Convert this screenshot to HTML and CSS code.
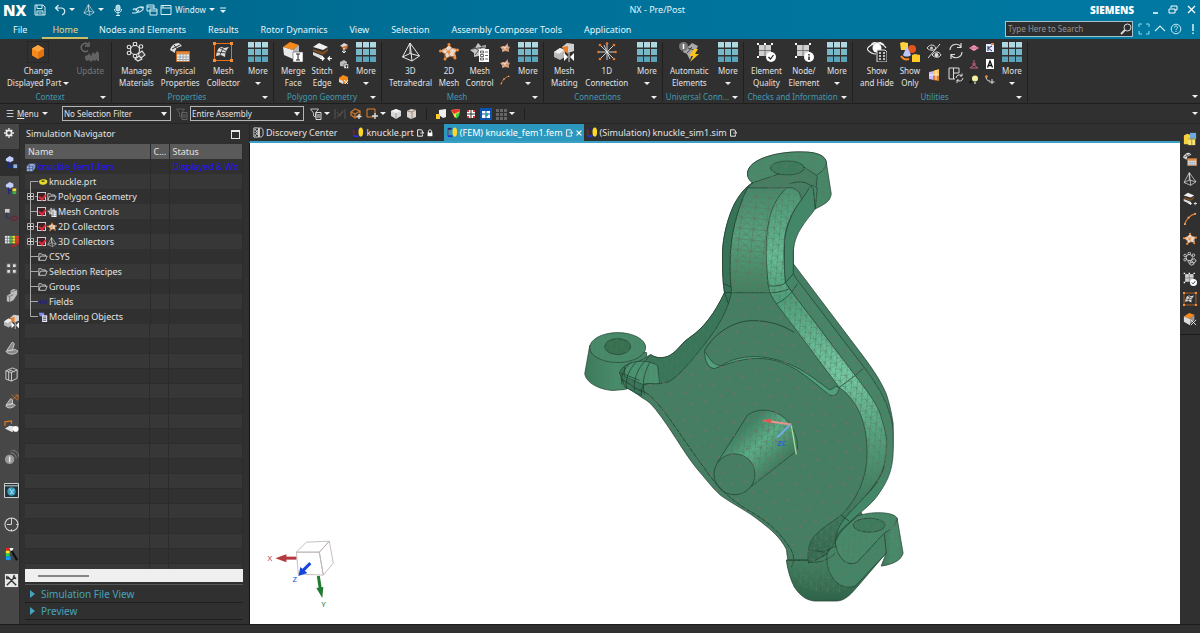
FILE: index.html
```html
<!DOCTYPE html>
<html lang="en">
<head>
    <meta charset="UTF-8">
    <meta name="viewport" content="width=device-width, initial-scale=1.0">
    <title>NX - Pre/Post</title>
    <link rel="stylesheet" href="styles.css">
</head>
<body>

    <!-- Icon sprite -->
    <svg class="sprite" aria-hidden="true">
        <symbol id="i-save" viewBox="0 0 12 12"><path d="M1 1h8l2 2v8H1zM3 1v3.500h5V1M3 11V7h6v4M4.500 9h3" fill="none" stroke="#d5edf5"/></symbol>
        <symbol id="i-undo" viewBox="0 0 12 12"><path d="M4.500 1L1.500 4l3 3M2 4h5c5 0 4.500 6 1 7" fill="none" stroke="#d5edf5" stroke-width="1.200"/></symbol>
        <symbol id="i-tet" viewBox="0 0 20 20"><path d="M9 1L1.500 15l9.500 4 7.500-5zM9 1l2 18M1.500 15L9 11.500l9.500 2.500M9 1v10.500" fill="none" stroke="#e8e8e8" stroke-linejoin="round"/></symbol>
        <symbol id="i-mic" viewBox="0 0 12 12"><rect x="4" y="1" width="4" height="6" rx="2" fill="#9fd0e2" stroke="#d5edf5"/><path d="M2.500 5c0 5 7 5 7 0M6 9v2.500M4 11.500h4" fill="none" stroke="#d5edf5"/></symbol>
        <symbol id="i-pen" viewBox="0 0 12 12"><path d="M1 6c1-2 3-1 4 0M4 7c0-4 6-5 7-3s-4 5-6 4M0 9h4l3-3M9 4l3-1" fill="none" stroke="#d5edf5" stroke-width="1.100"/></symbol>
        <symbol id="i-copywin" viewBox="0 0 12 12"><path d="M1 1h7v6H1zM1 3h7" fill="none" stroke="#d5edf5"/><path d="M4 5h7v6H4zM4 7h7" fill="#006a8e" stroke="#d5edf5"/></symbol>
        <symbol id="i-win" viewBox="0 0 12 12"><path d="M1 1.500h10v9H1zM1 4h10M3 2v2" fill="none" stroke="#d5edf5"/></symbol>
        <symbol id="i-cube" viewBox="0 0 20 20"><path d="M10 3l6 3.500v7L10 17l-6-3.500v-7z" fill="#f58a1a"/><path d="M10 3l6 3.500-6 3.500-6-3.500z" fill="#ffa540"/><path d="M10 10l6-3.500v7L10 17z" fill="#e27410"/></symbol>
        <symbol id="i-update" viewBox="0 0 20 20"><path d="M8 2.500a4 4 0 1 0 0 6M9 0v4H5" fill="none" stroke="#6c6c6c" stroke-width="1.300"/><path d="M5 14l3-1 1-2 2 3 2-4 2 2 2-3 2 2v8h-2v-2l-2 2-2-1-2 2-2-2-2 1-2-2z" fill="#626262"/></symbol>
        <symbol id="i-atom" viewBox="0 0 20 20"><g fill="none" stroke="#e4e4e4" stroke-width="1.100"><circle cx="9" cy="8" r="4.500"/><circle cx="9" cy="2" r="1.800"/><circle cx="3" cy="5" r="1.800"/><circle cx="15" cy="4.500" r="1.800"/><circle cx="3" cy="11" r="1.800"/><circle cx="9" cy="14" r="1.800"/><path d="M12 12l4-3 3 4-4 3zM9 17l4-3 3 3-4 2z" fill="#444"/></g></symbol>
        <symbol id="i-prop" viewBox="0 0 20 20"><path d="M0 8C1 4 4 1 9 1l3 3C8 5 5 7 5 11z" fill="#e0e0e0"/><path d="M4 3l4 5M2 7l8-4" stroke="#333" fill="none"/><path d="M6.500 9.500h13v10h-13z" fill="#f1efec" stroke="#c46a24"/><path d="M7 10h12v2.500H7z" fill="#e08a43"/><path d="M10 12v8M13 12v8M16 12v8M7 15h12.500M7 17.500h12.500" stroke="#8c99a6" stroke-width=".8"/></symbol>
        <symbol id="i-coll" viewBox="0 0 20 20"><path d="M1.500 1.500h17v17h-17z" fill="none" stroke="#d97425"/><path d="M0 0h3v3H0zM17 0h3v3h-3zM0 17h3v3H0zM17 17h3v3h-3z" fill="#f59038"/><path d="M3 14c1-5 2-9 6-9l2 1 5-1c-3 3-4 6-4 10l-4-2z" fill="#dedede"/><path d="M10 6L7 13M4 10l9 1M7 6l6 3" stroke="#444" fill="none"/></symbol>
        <symbol id="i-grid" viewBox="0 0 20 20"><path d="M0 0h6v5.500H0zM7 0h6v5.500H7zM14 0h6v5.500h-6z" fill="#aed9e3"/><path d="M0 7h6v6H0zM7 7h6v6H7zM14 7h6v6h-6z" fill="#78b8c9"/><path d="M0 14.500h6V20H0zM7 14.500h6V20H7zM14 14.500h6V20h-6z" fill="#5ba3b9"/></symbol>
        <symbol id="i-merge" viewBox="0 0 20 20"><path d="M0 5l7-5 9 3-6 5z" fill="#f58a1a"/><path d="M0 5l10 3v9L1 13z" fill="#e9e9e9"/><path d="M10 8l6-5v7l-6 7z" fill="#b9b9b9"/><path d="M10 10h10v10H10z" fill="#fff" stroke="#555" stroke-width=".6"/><path d="M15 12v6M13 12h4M13 18h4" stroke="#222"/></symbol>
        <symbol id="i-stitch" viewBox="0 0 20 20"><path d="M1 5l6-4 9 4-5 3z" fill="#f0f0f0"/><path d="M1 7l10 3 5-4v3l-5 4L1 9z" fill="#7a4a20"/><path d="M1 10l10 4v4L1 13z" fill="#ddd"/><path d="M8 16.500h4m-2-2l2 2-2 2M20 16.500h-4m2-2l-2 2 2 2" fill="none" stroke="#fff" stroke-width="1.200"/></symbol>
        <symbol id="i-s1" viewBox="0 0 10 10"><path d="M1 3l4-3 4 2-3 3z" fill="#ddd"/><path d="M3 4l6-2-1 4-4 1z" fill="#c9773c"/><path d="M5 5v5M3 8l2 2 2-2" stroke="#eee" fill="none"/></symbol>
        <symbol id="i-s2" viewBox="0 0 10 10"><path d="M1 3l4-2 3 2v5l-7-1z" fill="#bbb"/><path d="M5 5h4.500v4.500H5z" fill="#fff" stroke="#333" stroke-width=".6"/><path d="M6 7h3M7.500 6v3" stroke="#222" stroke-width=".8"/></symbol>
        <symbol id="i-s3" viewBox="0 0 10 10"><path d="M0 3l4-3 5 2v5l-4 2-5-3z" fill="#f58a1a"/><path d="M0 4l4 2v3L0 7z" fill="#ddd"/><path d="M5 5l4 4M9 5L6 9" stroke="#eee" fill="none"/></symbol>
        <symbol id="i-mesh2" viewBox="0 0 20 20"><path d="M4 7l3-1 3-3 3 3 5 1-2 4 1 4-5-1-5 2-1-4-4-3z" fill="#ead9ca"/><path d="M2 9l4-2 4-4 3 3 5 2-3 4 1 4-5-2-5 3v-5zM6 12l7-6M7 7l4 7" stroke="#d5803f" stroke-width=".8" fill="none"/><g fill="#f38a35"><circle cx="10" cy="2.500" r="1.500"/><circle cx="18.500" cy="8" r="1.500"/><circle cx="1.500" cy="9" r="1.500"/><circle cx="16" cy="16" r="1.500"/><circle cx="6" cy="17" r="1.500"/><circle cx="10" cy="10" r="1.500"/></g></symbol>
        <symbol id="i-ctrl" viewBox="0 0 20 20"><path d="M8 1l3 3 5-1-1 5 2 4-13 3 0-4-4-3 5-2z" fill="#c6c6c6"/><path d="M2 7l13-2M5 13l8-10M4 5l9 7" stroke="#555" fill="none"/><path d="M9 7h10v13H9z" fill="#fff"/><path d="M10.500 9h3v2h-3zM10.500 12.500h3v2h-3zM10.500 16h3v2h-3zM15 10h3M15 13.500h3M15 17h3" stroke="#444" stroke-width=".8" fill="none"/></symbol>
        <symbol id="i-m1" viewBox="0 0 10 10"><path d="M0 4l3-1 2 0 3-3v3l2 1-1 2v3l-3-1-4 1 0-3z" fill="#c4916f"/><path d="M1 5l7-1M3 8l4-6M3 3l4 5" stroke="#f3dfce" stroke-width=".7"/></symbol>
        <symbol id="i-curve" viewBox="0 0 15 15"><path d="M2 13C3 8 8 3 13 2" fill="none" stroke="#dd7b2b" stroke-width="1.300"/><path d="M1 12h2v2H1zM12 1h2v2h-2zM5 5h2v2H5z" fill="#f7a263"/></symbol>
        <symbol id="i-mating" viewBox="0 0 20 20"><path d="M0 10l6-4 5 2v7l-5 3-6-3z" fill="#b9b9b9"/><path d="M0 10l5 2 6-4-5-2z" fill="#eee"/><path d="M8 5l5-4 7 1v7l-6 2-4-3z" fill="#d0d0d0"/><path d="M8 5l6-1v8l-4-3z" fill="#f07d20"/><path d="M10 11l4 4-4 4zM20 11l-4 4 4 4z" fill="#fff"/><path d="M15 11v9" stroke="#fff" stroke-width=".8"/></symbol>
        <symbol id="i-star" viewBox="0 0 20 20"><path d="M10 2v16M2 10h16M4 4l12 12M16 4L4 16M7 3l6 14" stroke="#e0e0e0" stroke-width=".9"/><g fill="#e9792a"><circle cx="3" cy="3" r="1.300"/><circle cx="10" cy="1.500" r="1.300"/><circle cx="17" cy="3" r="1.300"/><circle cx="1.500" cy="10" r="1.300"/><circle cx="18.500" cy="10" r="1.300"/><circle cx="3" cy="17" r="1.300"/><circle cx="17" cy="17" r="1.300"/></g></symbol>
        <symbol id="i-auto" viewBox="0 0 20 20"><path d="M5 6l5-2 3-3 2 1 4 2-2 4-3 1-3 9-3-6-4-2z" fill="#a9a9a9"/><path d="M9 6l6 2M8 11l5-6" stroke="#444"/><circle cx="4.500" cy="4.500" r="4.500" fill="#777"/><path d="M4.500 2v5" stroke="#fff" stroke-width="1.500"/><path d="M15 7l-5 7h4l-3 6 9-8h-4l3-5z" fill="#ffc21a"/></symbol>
        <symbol id="i-check" viewBox="0 0 20 20"><path d="M3 3h12v11H3z" fill="#cfcfcf"/><path d="M9 3v11M3 8.500h12" stroke="#777"/><path d="M1 1h2v2H1zM15 1h2v2h-2zM1 14h2v2H1zM8 1h2v2H8z" fill="#fff"/><circle cx="15" cy="15" r="5" fill="#fff"/><path d="M12.500 15l2 2 3-4" fill="none" stroke="#222" stroke-width="1.200"/></symbol>
        <symbol id="i-info" viewBox="0 0 20 20"><path d="M3 3h12v11H3z" fill="#cfcfcf"/><path d="M9 3v11M3 8.500h12" stroke="#777"/><path d="M1 1h2v2H1zM15 1h2v2h-2zM1 14h2v2H1z" fill="#fff"/><circle cx="15" cy="15" r="5" fill="#fff"/><path d="M15 12v1.500M15 14.500V18" stroke="#222" stroke-width="1.500"/></symbol>
        <symbol id="i-eye" viewBox="0 0 20 20"><path d="M0 7c4-6 15-8 19-1M0 7c3 4 6 5 9 5M4 3c3-4 9-4 13 0" fill="none" stroke="#eee" stroke-width="1.200"/><circle cx="10" cy="6" r="4.500" fill="#fff"/><path d="M10 8h8l2 2v10H10z" fill="#2f2f2f" stroke="#ddd"/><path d="M12 11h2M16 11h2M12 14h2M16 14h2M12 17h2M16 17h2" stroke="#eee" stroke-width="1.300"/></symbol>
        <symbol id="i-only" viewBox="0 0 20 20"><path d="M0 1l3-1 5 1v7H1z" fill="#ffd43b"/><circle cx="12" cy="7" r="4" fill="#e2541c"/><path d="M7 4l4 9c-2 2-7 2-8 0z" fill="#b9c6ff"/><path d="M12 13l3-1 5 1v7h-8z" fill="#ffca28"/><path d="M1 14c2 3 5 4 8 3" fill="none" stroke="#ff8a1f" stroke-width="2"/></symbol>
        <symbol id="i-swap" viewBox="0 0 16 16"><path d="M1 5c3-4 7-4 9 0-2 3-6 3-9 0zM6 12c3-4 7-4 9 0-2 3-6 3-9 0zM14 1L2 15" fill="none" stroke="#ddd"/><circle cx="5.500" cy="5" r="1.500" fill="#ccc"/><circle cx="10.500" cy="12" r="2" fill="#ddd"/></symbol>
        <symbol id="i-refresh" viewBox="0 0 16 16"><path d="M2 7a6 6 0 0 1 11-3M14 9A6 6 0 0 1 3 12M13 0v4.500H9M3 16v-4.500h4" fill="none" stroke="#ddd" stroke-width="1.200"/></symbol>
        <symbol id="i-clip" viewBox="0 0 16 16"><path d="M3 5l5-1v9l-5-1z" fill="#c9b9ff"/><path d="M7 4l6-2v6H7z" fill="#ffc54d"/><path d="M7 8h6v6l-6-1z" fill="#e07f28"/><path d="M3 8h10M10 3v10" stroke="#fff" stroke-width=".8"/></symbol>
        <symbol id="i-layout" viewBox="0 0 16 16"><path d="M1 1h10v5M1 1v11h6M5.500 1v11M5.500 6H11" fill="none" stroke="#ddd"/><path d="M8 11a3.500 3.500 0 0 1 6-2M15 11a3.500 3.500 0 0 1-6 2M14 6.500V9h-2M9 16v-3h2" fill="none" stroke="#ddd"/></symbol>
        <symbol id="i-pink" viewBox="0 0 10 10"><path d="M0 5l5-3 5 3-5 3z" fill="#f59ab5"/><path d="M0 5h10" stroke="#b54a6c" stroke-width=".7"/></symbol>
        <symbol id="i-csys" viewBox="0 0 10 10"><path d="M5 1v5L1 9M5 6l4 3M1 9h8M3 5h4" fill="none" stroke="#c65f85"/></symbol>
        <symbol id="i-bulb" viewBox="0 0 10 10"><circle cx="6" cy="3.500" r="3" fill="#f4f1a0"/><path d="M5 7h2v2H5z" fill="#999"/><path d="M0 7h3M1.500 5.500v3" stroke="#111"/></symbol>
        <symbol id="i-note" viewBox="0 0 10 10"><path d="M1 1h8v8H1z" fill="#e8ecff"/><path d="M3 8V3M3 5l4-2M3 5l4 3" fill="none" stroke="#26305f"/><path d="M6 0h3v2H6z" fill="#e58a34"/></symbol>
        <symbol id="i-a" viewBox="0 0 10 10"><path d="M1 0h8v10H1z" fill="#fff"/><path d="M2.500 8.500L5 2l2.500 6.500M3.500 6.500h3" fill="none" stroke="#111" stroke-width="1.300"/></symbol>
        <symbol id="i-link" viewBox="0 0 10 10"><path d="M1 1c0 3 1 5 4 5M7 4v5M4.500 7h5" fill="none" stroke="#ddd"/><circle cx="1.500" cy="1.500" r="1.300" fill="#f08a33"/></symbol>
        <symbol id="i-filter" viewBox="0 0 12 12"><path d="M.500 1h8L5.500 5v4L3.500 8V5z" fill="none" stroke="#bbb"/><path d="M6 4.500h5v7H6z" fill="#333" stroke="#ddd"/><path d="M7 7h3M7 9h3" stroke="#ddd"/></symbol>
        <symbol id="i-snap" viewBox="0 0 12 12"><path d="M1 1v10M11 1v10M3 4l3 4 3-6M3 9l6-5" stroke="#555" fill="none"/></symbol>
        <symbol id="i-ring" viewBox="0 0 12 12"><path d="M1 4l4-3 5 2v4l-5 3-4-3zM1 4l4 2 5-3M5 6v4" fill="none" stroke="#c8742c" stroke-width="1.300"/><path d="M9 6v5M6.500 8.500h5" stroke="#ddd" stroke-width="1.300"/></symbol>
        <symbol id="i-rect" viewBox="0 0 12 12"><path d="M1 1h8v8H1z" fill="none" stroke="#e07f28"/><path d="M9 5v6M6 8h6" stroke="#ddd" stroke-width="1.300"/></symbol>
        <symbol id="i-solid" viewBox="0 0 12 12"><path d="M6 1l5 2v5l-5 3-5-3V3z" fill="#d8d8d8"/><path d="M1 3l5 2 5-2-5-2z" fill="#f2f2f2"/><path d="M6 5v6" stroke="#999" fill="none"/></symbol>
        <symbol id="i-solid2" viewBox="0 0 12 12"><path d="M5 1l5 1v7l-5 2-4-2V3z" fill="#ddd4cd"/><path d="M1 3l5 1 4-2M6 4v7" stroke="#9a8a7d" fill="none"/></symbol>
        <symbol id="i-part" viewBox="0 0 12 12"><path d="M4 2l7-1v8l-3 1-4-3z" fill="#eee"/><path d="M1 6h4v5H1z" fill="#ffc928"/></symbol>
        <symbol id="i-contour" viewBox="0 0 12 12"><path d="M1 2l9-1-1 5-4 4z" fill="#ffe14d"/><path d="M1 2l9-1v2L4 6z" fill="#e33"/><path d="M6 6l4-2-1 4-3 3z" fill="#4c4"/></symbol>
        <symbol id="i-nodes" viewBox="0 0 12 12"><path d="M2 2h8v8H2z" fill="#fff"/><path d="M6 2v8M2 6h8" stroke="#333"/><path d="M2 2h2v2H2zM8 2h2v2H8zM2 8h2v2H2zM8 8h2v2H8z" fill="#d33"/></symbol>
        <symbol id="i-nodeb" viewBox="0 0 12 12"><path d="M2 3h8v7H2z" fill="#fff"/><path d="M6 1v10M1 6h10" stroke="#0a53b0"/><path d="M5 5h3v3H5z" fill="#2aa"/></symbol>
        <symbol id="i-dots" viewBox="0 0 12 12"><path d="M1 1h3v3H1zM5 1h3v3H5zM9 1h3v3H9zM1 5h3v3H1zM5 5h3v3H5zM9 5h3v3H9zM1 9h3v3H1zM5 9h3v3H5zM9 9h3v3H9z" fill="#666"/></symbol>
        <symbol id="i-disc" viewBox="0 0 12 12"><path d="M1 1h5v10H1zM7 1c4 0 4 2 4 5s0 5-4 5M7 1v10M2 2l3 4-3 4M6 3L3 6l3 3" fill="none" stroke="#ddd"/></symbol>
        <symbol id="i-tabpart" viewBox="0 0 12 12"><path d="M1 2v8" stroke="#b02020"/><path d="M1 10h5" stroke="#2233dd" stroke-width="2"/><path d="M1 2h4" stroke="#2c2060" stroke-width="2"/><ellipse cx="8.500" cy="5.500" rx="2.500" ry="5" fill="#ffd829"/></symbol>
        <symbol id="i-doc" viewBox="0 0 10 10"><path d="M8 4V2L6.500 1H2v8h6V7M5.500 5h4M8 3.500L9.500 5 8 6.500" fill="none" stroke="#f2f2f2" stroke-width="1.200"/></symbol>
        <symbol id="i-lock" viewBox="0 0 10 10"><path d="M2 4.500h6V9H2z" fill="#fff"/><path d="M3 5V3c0-2.500 4-2.500 4 0v2" fill="none" stroke="#fff" stroke-width="1.200"/></symbol>
        <symbol id="i-folder" viewBox="0 0 12 12"><path d="M1 10V2h3l1 1.500h4V5M1 10h8l2-5H3z" fill="none" stroke="#d8d8d8"/></symbol>
        <symbol id="i-prt" viewBox="0 0 12 12"><path d="M1 5c2-3 8-3 10-1v3c-2 3-7 3-9 1z" fill="#e3d92b"/><ellipse cx="6" cy="5" rx="2" ry="1" fill="#5c5a10"/></symbol>
        <symbol id="i-fem" viewBox="0 0 12 12"><path d="M1 5l3-3h7v5l-3 4H1z" fill="#9db2e8"/><path d="M1 5h7l3-3M8 5v6M1 8h7l3-3M4 2v9" stroke="#35507f" fill="none" stroke-width=".8"/></symbol>
        <symbol id="i-fields" viewBox="0 0 12 12"><path d="M0 6h2M3 4v4M5 4l3 4M8 4L5 8M10 4v4" stroke="#241d80" stroke-width="1.200"/></symbol>
        <symbol id="i-model" viewBox="0 0 12 12"><path d="M1 1h6l1 4H2z" fill="#7d8df0"/><path d="M5 4h6v8H5z" fill="#eef"/><path d="M6 6h4M6 8h4M6 10h4" stroke="#445"/></symbol>
        <symbol id="t-tee" viewBox="0 0 13 15"><path d="M5.500 0v15M5.500 7.500H13" stroke="#a8a8a8"/></symbol>
        <symbol id="t-top" viewBox="0 0 13 15"><path d="M5.500 15V7.500H13" fill="none" stroke="#a8a8a8"/></symbol>
        <symbol id="t-end" viewBox="0 0 13 15"><path d="M5.500 0v7.500H13" fill="none" stroke="#a8a8a8"/></symbol>
        <symbol id="t-plus" viewBox="0 0 13 15"><path d="M5.500 0v15M10 7.500h3" stroke="#a8a8a8"/><path d="M2.500 4.500h6v6h-6z" fill="#333" stroke="#a8a8a8"/><path d="M5.500 5v5M3 7.500h5" stroke="#ddd"/></symbol>
        <symbol id="i-gear" viewBox="0 0 12 12"><circle cx="6" cy="6" r="3.200" fill="none" stroke="#eee" stroke-width="2"/><path d="M6 0v2M6 10v2M0 6h2M10 6h2M2 2l1.500 1.500M8.500 8.500L10 10M10 2L8.500 3.500M3.500 8.500L2 10" stroke="#eee" stroke-width="1.600"/></symbol>
        <symbol id="r-nav" viewBox="0 0 16 16"><path d="M2 4l4-3 4 2v3L6 8 2 6z" fill="#c2cfff"/><path d="M5 7v6h5M5 10h4" stroke="#1a2a80" fill="none" stroke-width="1.500"/><path d="M10 10h4v4h-4z" fill="#8fb5e8"/></symbol>
        <symbol id="r-nav2" viewBox="0 0 16 16"><path d="M2 4l4-3 4 2v3L6 8 2 6z" fill="#c2cfff"/><path d="M5 7v7M5 10h4" stroke="#1a2a80" fill="none" stroke-width="1.500"/><path d="M9 8h4v3H9z" fill="#ffd829"/><path d="M9 11h4v3H9z" fill="#36b04a"/></symbol>
        <symbol id="r-nav3" viewBox="0 0 16 16"><path d="M1 1h5v4H1z" fill="#ccc"/><path d="M3 5v6h4" stroke="#26306b" fill="none"/><path d="M7 11c1-3 6-3 7 0-1 3-6 3-7 0z" fill="none" stroke="#6e2430" stroke-width="1.300"/></symbol>
        <symbol id="r-color" viewBox="0 0 16 16"><path d="M1 2h5v8H1z" fill="#e8f0ff"/><path d="M6 2h3v8H6z" fill="#4cbb48"/><path d="M9 2h3v8H9z" fill="#f2da2c"/><path d="M12 2h4v8h-4z" fill="#e23b24"/><path d="M1 4.500h15M1 7.500h15M3.500 2v8" stroke="#555" stroke-width=".7"/><path d="M8 14l2-2 2 1 3-4" stroke="#c22" fill="none" stroke-width="1.300"/></symbol>
        <symbol id="r-four" viewBox="0 0 16 16"><path d="M3 3h4v4H3zM9 3h4v4H9zM3 9h4v4H3zM9 9h4v4H9z" fill="#ddd" stroke="#555"/></symbol>
        <symbol id="r-blocks" viewBox="0 0 16 16"><path d="M7 3l3-2 4 1v5l-4 6-3-1zM3 8l4-2 3 1v6l-4 2-3-1z" fill="#bdbdbd"/><path d="M3 8l3 1v6M6 9l4-2M8 4l3-1 3-1" stroke="#777" fill="none"/></symbol>
        <symbol id="r-book" viewBox="0 0 16 16"><path d="M3 10L9 1l2 2-2 7zM2 11c2 4 10 4 13 0l-3-2-5 1z" fill="#888" stroke="#ccc"/></symbol>
        <symbol id="r-box" viewBox="0 0 16 16"><path d="M2 4l7-3 5 2v9l-6 3-6-2zM2 4l6 2v9M8 6l6-3M5 5v9M5 3l6 2" fill="none" stroke="#d0d0d0"/></symbol>
        <symbol id="r-bookx" viewBox="0 0 16 16"><path d="M2 12L7 5l2 1v5zM2 13c2 3 8 2 10-1l-3-2-4 1z" fill="#888" stroke="#ccc"/><path d="M8 1l7 6M15 1L9 6M12 1h3v5" stroke="#c06e28" fill="none"/></symbol>
        <symbol id="r-tool" viewBox="0 0 16 16"><path d="M1 6V2l7-1v3" fill="none" stroke="#e07820" stroke-width="1.300"/><path d="M1 9l5-3 5 1-2 6z" fill="#e4e4e4"/><circle cx="12.500" cy="9.500" r="3" fill="#fff"/></symbol>
        <symbol id="r-cast" viewBox="0 0 16 16"><circle cx="6" cy="10" r="5" fill="#999"/><path d="M6 7v6" stroke="#eee" stroke-width="1.500"/><path d="M7 3c4 0 6 3 6 6M7 0c6 0 9 4 9 8" stroke="#888" fill="none"/></symbol>
        <symbol id="r-web" viewBox="0 0 16 16"><path d="M.5.500h15v15H.5z" fill="#20343c" stroke="#ddd"/><path d="M0 3h16" stroke="#ddd"/><circle cx="8" cy="9" r="4.500" fill="#3b9cc0"/><path d="M6 6l2 3-1 3M11 7l-3 2 2 3" stroke="#bfe4f0" fill="none"/></symbol>
        <symbol id="r-clock" viewBox="0 0 16 16"><circle cx="8" cy="8" r="7" fill="none" stroke="#ddd" stroke-width="1.100"/><path d="M8 1v7H3M13 8h2M8 13v2" stroke="#ddd" fill="none"/></symbol>
        <symbol id="r-wand" viewBox="0 0 16 16"><path d="M2 1h4v3H2z" fill="#e22"/><path d="M2 4h4v3H2z" fill="#fe2"/><path d="M2 7h4v3H2z" fill="#2d4"/><path d="M2 10h5v4H2z" fill="#19f"/><path d="M6 1h4l-2 6z" fill="#fff"/><path d="M8 4l6 10" stroke="#111" stroke-width="2.500"/></symbol>
        <symbol id="r-wrench" viewBox="0 0 16 16"><path d="M1 1h14v14H1z" fill="#e8e8e8"/><path d="M4 4l9 9M12 4L3 13M3 3v3h3M11 2l-1 3 3 1" stroke="#333" stroke-width="1.500" fill="none"/></symbol>
        <symbol id="r-lib" viewBox="0 0 16 16"><path d="M1 4l4-2 3 1v11H1z" fill="#f4d13d"/><path d="M8 1h7v7H8z" fill="#6ea9dc"/><path d="M6 8h8v7H6z" fill="#f7e27a"/><path d="M6 8h8M10 8v7" stroke="#a8871d"/></symbol>
        <symbol id="r-orange" viewBox="0 0 16 16"><path d="M1 5l6-4 6 2-5 5z" fill="#f58a1a"/><path d="M1 5l7 3v7l-7-4z" fill="#ddd"/><path d="M8 8l5-5v6l-5 5z" fill="#999"/><path d="M9 9l6 6M15 9l-6 6" stroke="#eee"/></symbol>
    </svg>

    <header class="titlebar">
        <div class="quick">
            <span class="logo">NX</span>
            <button aria-label="Save"><svg><use href="#i-save"/></svg></button>
            <button aria-label="Undo"><svg><use href="#i-undo"/></svg><i class="caret"></i></button>
            <button aria-label="Mesh"><svg><use href="#i-tet"/></svg><i class="caret"></i></button>
            <button aria-label="Voice"><svg><use href="#i-mic"/></svg></button>
            <button aria-label="Touch"><svg><use href="#i-pen"/></svg></button>
            <button class="tight" aria-label="Switch window"><svg><use href="#i-copywin"/></svg></button>
            <button class="tight"><svg><use href="#i-win"/></svg>Window<i class="caret"></i></button>
            <button class="tight" aria-label="Customize"><svg viewBox="0 0 12 12"><path d="M3 4h6" stroke="#e3f4f9"/><path d="M3 6h6L6 9z" fill="#e3f4f9"/></svg></button>
        </div>
        <h1>NX - Pre/Post</h1>
        <div class="window-buttons">
            <span class="brand">SIEMENS</span>
            <button aria-label="Minimize"><svg viewBox="0 0 10 10"><path d="M3 8h5" stroke="#fff" stroke-width="1.500"/></svg></button>
            <button aria-label="Restore"><svg viewBox="0 0 10 10"><path d="M3 3V1h6v4H7M1 4h6v4H1z" fill="none" stroke="#fff"/></svg></button>
            <button aria-label="Close"><svg viewBox="0 0 10 10"><path d="M2 1l7 7M9 1L2 8" stroke="#fff" stroke-width="1.300"/></svg></button>
        </div>
    </header>

    <div class="tabbar">
        <nav>
            <a href="#">File</a>
            <a href="#" class="active">Home</a>
            <a href="#">Nodes and Elements</a>
            <a href="#">Results</a>
            <a href="#">Rotor Dynamics</a>
            <a href="#">View</a>
            <a href="#">Selection</a>
            <a href="#">Assembly Composer Tools</a>
            <a href="#">Application</a>
        </nav>
        <div class="search">
            <input type="text" placeholder="Type Here to Search" aria-label="Search">
            <svg viewBox="0 0 12 12"><circle cx="7.500" cy="4.500" r="3.500" fill="none" stroke="#ddd"/><path d="M5 7l-4 4" stroke="#ddd" stroke-width="1.800"/></svg>
        </div>
        <div class="tab-tools">
            <button aria-label="Full screen"><svg viewBox="0 0 12 12"><path d="M1 4V1h3M8 1h3v3M11 8v3H8M4 11H1V8" fill="none" stroke="#8fdcf0"/></svg></button>
            <button aria-label="Collapse ribbon"><svg viewBox="0 0 12 12"><path d="M1 8l5-5 5 5" fill="none" stroke="#c8ecf5" stroke-width="1.200"/></svg></button>
            <button aria-label="Help"><svg viewBox="0 0 12 12"><circle cx="6" cy="6" r="4.800" fill="none" stroke="#c8ecf5"/><path d="M4.500 4.500c0-2 3-2 3 0 0 1-1.500 1-1.500 2.500M6 8v1" fill="none" stroke="#c8ecf5"/></svg></button>
            <button aria-label="Alerts"><svg viewBox="0 0 12 12"><path d="M7 1v7M7 9.500V11" stroke="#c8ecf5" stroke-width="1.600"/></svg></button>
        </div>
    </div>

    <section class="ribbon">
        <div class="group g-context">
            <div class="group-body">
                <button class="big framed"><svg><use href="#i-cube"/></svg><span>Change<br>Displayed Part <i class="caret"></i></span></button>
                <button class="big" disabled><svg><use href="#i-update"/></svg><span>Update</span></button>
            </div>
            <div class="group-name"><span>Context</span><i class="caret"></i></div>
        </div>
        <div class="group g-properties">
            <div class="group-body">
                <button class="big"><svg><use href="#i-atom"/></svg><span>Manage<br>Materials</span></button>
                <button class="big"><svg><use href="#i-prop"/></svg><span>Physical<br>Properties</span></button>
                <button class="big"><svg><use href="#i-coll"/></svg><span>Mesh<br>Collector</span></button>
                <button class="big more"><svg><use href="#i-grid"/></svg><span>More<br><i class="caret"></i></span></button>
            </div>
            <div class="group-name"><span>Properties</span><i class="caret"></i></div>
        </div>
        <div class="group g-polygon">
            <div class="group-body">
                <button class="big"><svg><use href="#i-merge"/></svg><span>Merge<br>Face</span></button>
                <button class="big"><svg><use href="#i-stitch"/></svg><span>Stitch<br>Edge</span></button>
                <div class="stack">
                    <button aria-label="Split face"><svg><use href="#i-s1"/></svg></button>
                    <button aria-label="Add face"><svg><use href="#i-s2"/></svg></button>
                    <button aria-label="Repair face"><svg><use href="#i-s3"/></svg></button>
                </div>
                <button class="big more"><svg><use href="#i-grid"/></svg><span>More<br><i class="caret"></i></span></button>
            </div>
            <div class="group-name"><span>Polygon Geometry</span><i class="caret"></i></div>
        </div>
        <div class="group g-mesh">
            <div class="group-body">
                <button class="big"><svg><use href="#i-tet"/></svg><span>3D<br>Tetrahedral</span></button>
                <button class="big"><svg><use href="#i-mesh2"/></svg><span>2D<br>Mesh</span></button>
                <button class="big"><svg><use href="#i-ctrl"/></svg><span>Mesh<br>Control</span></button>
                <div class="stack">
                    <button aria-label="Mapped mesh"><svg><use href="#i-m1"/></svg></button>
                    <button aria-label="Dependent mesh"><svg><use href="#i-m1"/></svg></button>
                    <button aria-label="1D mesh"><svg><use href="#i-curve"/></svg></button>
                </div>
                <button class="big more"><svg><use href="#i-grid"/></svg><span>More<br><i class="caret"></i></span></button>
            </div>
            <div class="group-name"><span>Mesh</span><i class="caret"></i></div>
        </div>
        <div class="group g-connections">
            <div class="group-body">
                <button class="big"><svg><use href="#i-mating"/></svg><span>Mesh<br>Mating</span></button>
                <button class="big"><svg><use href="#i-star"/></svg><span>1D<br>Connection</span></button>
                <button class="big more"><svg><use href="#i-grid"/></svg><span>More<br><i class="caret"></i></span></button>
            </div>
            <div class="group-name"><span>Connections</span><i class="caret"></i></div>
        </div>
        <div class="group g-universal">
            <div class="group-body">
                <button class="big"><svg><use href="#i-auto"/></svg><span>Automatic<br>Elements</span></button>
                <button class="big more"><svg><use href="#i-grid"/></svg><span>More<br><i class="caret"></i></span></button>
            </div>
            <div class="group-name"><span>Universal Conn...</span><i class="caret"></i></div>
        </div>
        <div class="group g-checks">
            <div class="group-body">
                <button class="big"><svg><use href="#i-check"/></svg><span>Element<br>Quality</span></button>
                <button class="big"><svg><use href="#i-info"/></svg><span>Node/<br>Element</span></button>
                <button class="big more"><svg><use href="#i-grid"/></svg><span>More<br><i class="caret"></i></span></button>
            </div>
            <div class="group-name"><span>Checks and Information</span><i class="caret"></i></div>
        </div>
        <div class="group g-utilities">
            <div class="group-body">
                <button class="big"><svg><use href="#i-eye"/></svg><span>Show<br>and Hide</span></button>
                <button class="big"><svg><use href="#i-only"/></svg><span>Show<br>Only</span></button>
                <div class="stack pair">
                    <button aria-label="Invert shown"><svg><use href="#i-swap"/></svg></button>
                    <button aria-label="Clip section"><svg><use href="#i-clip"/></svg></button>
                </div>
                <div class="stack pair">
                    <button aria-label="Refresh"><svg><use href="#i-refresh"/></svg></button>
                    <button aria-label="Layout"><svg><use href="#i-layout"/></svg></button>
                </div>
                <div class="stack">
                    <button aria-label="Datum plane"><svg><use href="#i-pink"/></svg></button>
                    <button aria-label="Datum CSYS"><svg><use href="#i-csys"/></svg></button>
                    <button aria-label="Light"><svg><use href="#i-bulb"/></svg></button>
                </div>
                <div class="stack">
                    <button aria-label="Annotate"><svg><use href="#i-note"/></svg></button>
                    <button aria-label="Text"><svg><use href="#i-a"/></svg></button>
                    <button aria-label="Point"><svg><use href="#i-link"/></svg></button>
                </div>
                <button class="big more"><svg><use href="#i-grid"/></svg><span>More<br><i class="caret"></i></span></button>
            </div>
            <div class="group-name"><span>Utilities</span><i class="caret"></i></div>
        </div>
        <div class="group-end"><i class="caret"></i></div>
    </section>

    <div class="toolbar">
        <button class="menu-button"><span class="burger">☰</span><span><u>M</u>enu</span><i class="caret"></i></button>
        <span class="combo filter-combo"><select aria-label="Selection filter"><option>No Selection Filter</option></select></span>
        <button disabled aria-label="Clear filter"><svg><use href="#i-filter"/></svg></button>
        <span class="combo scope-combo"><select aria-label="Selection scope"><option>Entire Assembly</option></select></span>
        <div class="tools">
            <button aria-label="General filters"><svg><use href="#i-filter"/></svg><i class="caret"></i></button>
            <button aria-label="Snap"><svg><use href="#i-snap"/></svg></button>
            <button aria-label="Related faces"><svg><use href="#i-ring"/></svg></button>
            <button aria-label="Rectangle select"><svg><use href="#i-rect"/></svg><i class="caret"></i></button>
            <button aria-label="Shaded"><svg><use href="#i-solid"/></svg></button>
            <button aria-label="Wireframe"><svg><use href="#i-solid2"/></svg></button>
        </div>
        <div class="tools display-tools">
            <button aria-label="Part"><svg><use href="#i-part"/></svg></button>
            <button aria-label="Contours"><svg><use href="#i-contour"/></svg></button>
            <button aria-label="Nodes"><svg><use href="#i-nodes"/></svg></button>
            <button class="on" aria-label="Mesh display"><svg><use href="#i-nodeb"/></svg></button>
            <button aria-label="Grid"><svg><use href="#i-dots"/></svg><i class="caret"></i></button>
        </div>
        <i class="caret toolbar-end"></i>
    </div>

    <main class="workspace">
        <aside class="rail">
            <button class="gear" aria-label="Settings"><svg><use href="#i-gear"/></svg></button>
            <div class="rail-items">
                <button class="selected" aria-label="Simulation Navigator"><svg><use href="#r-nav"/></svg></button>
                <button aria-label="Post Navigator"><svg><use href="#r-nav2"/></svg></button>
                <button aria-label="Assembly Navigator"><svg><use href="#r-nav3"/></svg></button>
                <button aria-label="Color"><svg><use href="#r-color"/></svg></button>
                <button aria-label="Constraints"><svg><use href="#r-four"/></svg></button>
                <button aria-label="Parts"><svg><use href="#r-blocks"/></svg></button>
                <button aria-label="Mating"><svg><use href="#i-mating"/></svg></button>
                <button aria-label="Library"><svg><use href="#r-book"/></svg></button>
                <button aria-label="Reuse"><svg><use href="#r-box"/></svg></button>
                <button aria-label="Features"><svg><use href="#r-bookx"/></svg></button>
                <button aria-label="Tooling"><svg><use href="#r-tool"/></svg></button>
                <button class="wide" aria-label="Messages"><svg><use href="#r-cast"/></svg></button>
                <button class="wide" aria-label="Web Browser"><svg><use href="#r-web"/></svg></button>
                <button class="wide" aria-label="History"><svg><use href="#r-clock"/></svg></button>
                <button aria-label="Visualization"><svg><use href="#r-wand"/></svg></button>
                <button aria-label="Roles"><svg><use href="#r-wrench"/></svg></button>
            </div>
        </aside>

        <section class="navigator">
            <div class="panel-title">
                <h2>Simulation Navigator</h2>
                <button class="maximize" aria-label="Maximize"></button>
            </div>
            <div class="tree">
                <table>
                    <thead>
                        <tr><th class="col-name">Name</th><th class="col-c">C...</th><th>Status</th></tr>
                    </thead>
                    <tbody>
                        <tr class="root"><td><div class="node"><svg><use href="#i-fem"/></svg>knuckle_fem1.fem</div></td><td></td><td class="status">Displayed &amp; Wo</td></tr>
                        <tr><td><div class="node"><svg class="branch"><use href="#t-top"/></svg><svg><use href="#i-prt"/></svg>knuckle.prt</div></td><td></td><td></td></tr>
                        <tr><td><label class="node"><svg class="branch"><use href="#t-plus"/></svg><input type="checkbox" checked><svg><use href="#i-folder"/></svg>Polygon Geometry</label></td><td></td><td></td></tr>
                        <tr><td><label class="node"><svg class="branch"><use href="#t-tee"/></svg><input type="checkbox" checked><svg><use href="#i-ctrl"/></svg>Mesh Controls</label></td><td></td><td></td></tr>
                        <tr><td><label class="node"><svg class="branch"><use href="#t-plus"/></svg><input type="checkbox" checked><svg><use href="#i-mesh2"/></svg>2D Collectors</label></td><td></td><td></td></tr>
                        <tr><td><label class="node"><svg class="branch"><use href="#t-plus"/></svg><input type="checkbox" checked><svg><use href="#i-tet"/></svg>3D Collectors</label></td><td></td><td></td></tr>
                        <tr><td><div class="node"><svg class="branch"><use href="#t-tee"/></svg><svg><use href="#i-folder"/></svg>CSYS</div></td><td></td><td></td></tr>
                        <tr><td><div class="node"><svg class="branch"><use href="#t-tee"/></svg><svg><use href="#i-folder"/></svg>Selection Recipes</div></td><td></td><td></td></tr>
                        <tr><td><div class="node"><svg class="branch"><use href="#t-tee"/></svg><svg><use href="#i-folder"/></svg>Groups</div></td><td></td><td></td></tr>
                        <tr><td><div class="node"><svg class="branch"><use href="#t-tee"/></svg><svg><use href="#i-fields"/></svg>Fields</div></td><td></td><td></td></tr>
                        <tr><td><div class="node"><svg class="branch"><use href="#t-end"/></svg><svg><use href="#i-model"/></svg>Modeling Objects</div></td><td></td><td></td></tr>
                    </tbody>
                </table>
                <div class="empty-rows"><span></span><span></span><span></span></div>
            </div>
            <div class="hscroll"><span></span></div>
            <button class="fold">Simulation File View</button>
            <button class="fold">Preview</button>
        </section>

        <section class="stage">
            <div class="doc-tabs">
                <button><svg><use href="#i-disc"/></svg>Discovery Center</button>
                <button><svg><use href="#i-tabpart"/></svg>knuckle.prt<svg class="mark"><use href="#i-doc"/></svg><svg class="mark"><use href="#i-lock"/></svg></button>
                <button class="active"><svg><use href="#i-tabpart"/></svg>(FEM) knuckle_fem1.fem<svg class="mark"><use href="#i-doc"/></svg><svg class="mark" viewBox="0 0 10 10"><path d="M2 2l6 6M8 2L2 8" stroke="#fff" stroke-width="1.500"/></svg></button>
                <button><svg><use href="#i-tabpart"/></svg>(Simulation) knuckle_sim1.sim<svg class="mark"><use href="#i-doc"/></svg></button>
            </div>
            <div class="view-row">
                <div class="viewport">
                    <svg viewBox="251 142 929 482" role="img" aria-label="Meshed knuckle part">
                        <defs>
                            <pattern id="tri" width="13" height="11" patternUnits="userSpaceOnUse" patternTransform="rotate(6)">
                                <path d="M0 0h13M0 5.500h13M0 0l6.500 5.500L0 11M13 0L6.500 5.500 13 11M6.500 0v11" fill="none" stroke="#5c7863" stroke-width=".7"/>
                            </pattern>
                            <pattern id="fine" width="8" height="8" patternUnits="userSpaceOnUse" patternTransform="rotate(50)">
                                <path d="M0 0h8M0 0l8 8M0 0v8M4 4l4-4" fill="none" stroke="#557762" stroke-width=".6"/>
                            </pattern>
                            <pattern id="specks" width="23" height="19" patternUnits="userSpaceOnUse" patternTransform="rotate(24)">
                                <path d="M2 3l3 1M4 2l-1 3M13 11l3-1M14 9l1 3M19 2l2 2M6 14l-2 2" stroke="#776e63" stroke-width=".8"/>
                            </pattern>
                            <clipPath id="part-clip">
                                <use href="#body"/>
                                <use href="#top-boss"/>
                                <use href="#left-boss"/>
                                <use href="#left-face"/>
                                <use href="#foot-boss"/>
                                <use href="#foot-side"/>
                                <use href="#foot-top"/>
                            </clipPath>
                            <clipPath id="body-clip">
                                <use href="#body"/>
                            </clipPath>
                            <linearGradient id="neck" x1="0" y1="0" x2="0" y2="1">
                                <stop offset="0" stop-color="#44896a"/><stop offset=".45" stop-color="#55a37e"/><stop offset="1" stop-color="#40805f"/>
                            </linearGradient>
                            <linearGradient id="rim" gradientUnits="userSpaceOnUse" x1="780" y1="190" x2="830" y2="545">
                                <stop offset="0" stop-color="#4b9473"/><stop offset=".18" stop-color="#66bd95"/><stop offset=".3" stop-color="#4f9f7b"/><stop offset=".53" stop-color="#74caa4"/><stop offset=".75" stop-color="#4f9976"/><stop offset=".9" stop-color="#3c7a5c"/><stop offset="1" stop-color="#346a50"/>
                            </linearGradient>
                            <linearGradient id="pin" gradientUnits="userSpaceOnUse" x1="738" y1="434" x2="772" y2="470">
                                <stop offset="0" stop-color="#3f8264"/><stop offset=".45" stop-color="#5aaf88"/><stop offset="1" stop-color="#3f7e60"/>
                            </linearGradient>
                            <linearGradient id="boss" x1="0" y1="0" x2="1" y2="0">
                                <stop offset="0" stop-color="#3b7a5b"/><stop offset=".5" stop-color="#478d6c"/><stop offset="1" stop-color="#458767"/>
                            </linearGradient>
                            <linearGradient id="foot" x1="0" y1="0" x2="0" y2="1">
                                <stop offset="0" stop-color="#448866"/><stop offset="1" stop-color="#2f6349"/>
                            </linearGradient>
                        </defs>

                        <g class="edges">
                            <!-- top boss -->
                            <path id="top-boss" d="M748 173c0-16 34-23 56-22 14 0 22 4 23 10l5 32c-1 8-8 11-16 15l-60-10-3-17c-3-3-5-5-5-8z" fill="url(#boss)"/>
                            <path d="M748 173c0-16 34-23 56-22 14 0 22 4 23 10 1 8-12 17-30 21-14 4-34 5-43 1-4-3-6-6-6-10z" fill="#478b6b"/>
                            <!-- left boss -->
                            <path id="left-boss" d="M590 345l-5 28c1 9 14 16 28 17l12-1 22-10V352z" fill="url(#boss)"/>
                            <!-- body silhouette -->
                            <path id="body" d="M753 182c-7 4-13 12-18 21-6 12-12 33-12 50 0 14 0 27 2 39-9 19-20 35-35 45-8 5-12 14-20 18-6 3-13 3-19-1l-31 18 5 14c7 4 12 7 17 11 6 3 10 7 14 12 16 20 26 40 41 59 8 9 15 19 24 27 14 10 26 15 41 27 10 8 18 14 25 27 1 9 2 15 5 20 3 7 6 13 13 18 8 6 20 6 32 6 10-1 15-8 20-13l26-30-25-45c10-6 18-15 24-25 13-16 12-28 12-57-2-13-4-21-7-30-6-14-14-25-22-36l-71-94v-23c1-10 4-17 8-23 4-7 9-12 14-19l2-23-15-10z" fill="#457e62"/>
                            <!-- outer right strip -->
                            <path d="M802 199c4-5 6-9 10-15l6 3-2 21c-5 7-10 12-14 19-4 6-7 13-8 23v23l3 5 68 89c9 12 16 22 22 36 3 9 7 18 7 30 0 20 2 36-12 57-6 10-14 17-24 25-10 10-18 14-22 24l-5-5c5-10 18-20 28-32 10-8 20-18 26-35 4-22 2-46-29-92l-66-87-4-6c-2-15-1-27-1-42 2-15 8-30 17-41z" fill="#438768"/>
                            <!-- neck panel -->
                            <path d="M748 187h39c-9 9-14 20-17 33-3 12-3 48-1 65l3 7h-40c-3-30-3-65 16-105z" fill="url(#neck)"/>
                            <path d="M753 182c-7 4-13 12-18 21-6 12-12 33-12 50 0 14 0 27 2 39h7c-3-30-3-65 16-105z" fill="#377457"/>
                            <!-- lower foot -->
                            <path d="M787 560h22c6 0 20-4 28-14l50 7-30 35c-6 7-12 13-20 13h-22c-10-1-16-8-20-14-4-8-7-18-8-27z" fill="url(#foot)"/>
                            <!-- right rim -->
                            <path d="M787 187c9-2 15 5 15 12-9 11-16 26-17 41-1 15 0 30 1 42l4 6 66 87c14 18 24 31 27 45 5 15 5 25 4 33-2 12-3 17-7 24-10 16-18 23-30 36-8 9-14 17-14 32-8 11-20 15-27 18-1-14 1-20 6-27 9-10 19-14 28-22 10-11 21-26 24-49 3-25-1-60-27-78l-63-84c-4-5-7-11-8-18-2-20-4-45 1-67 3-13 8-22 17-31z" fill="url(#rim)"/>
                            <!-- left fillet -->
                            <path d="M725 292h7l-3 11c-7 19-17 32-29 47-10 12-16 20-26 28-7 6-15 5-23 5-7 0-10 3-9 12-6-2-12-6-17-9l-5-14c2-8 14-11 25-11l6-7c5 4 13 4 19 1 8-4 12-13 20-18 15-10 26-26 35-45z" fill="#387659"/>
                            <path d="M625 366c8-7 24-7 33-1l2 18c-8 1-12-1-17 1l-18-8z" fill="#4a9471"/>
                            <!-- foot arm -->
                            <path id="foot-boss" d="M885 533c7-3 12-7 13-15l6 35c-2 7-9 11-22 13l5-13z" fill="url(#boss)"/>
                            <path id="foot-side" d="M885 533l2 20-30 32c-7 5-19 1-24-8-5-7-6-17-5-24l8-11c1 12 10 26 22 20z" fill="#438667"/>
                            <path id="foot-top" d="M836 542c4-12 14-18 22-26 12-5 37-5 40 2-2 8-8 12-13 15l-27 29c-12 6-21-8-22-20z" fill="#468a6a"/>
                            <!-- slot -->
                            <path d="M705 350c0 9 3 18 10 18 16-6 30-11 48-10 28 2 44 18 64 34 6 6 12 3 13-5l-4-1c-4 4-6 4-9 1-20-15-38-29-70-31-14 0-26 3-35 9-9 0-13-8-17-15z" fill="#51a07b"/>
                            <path class="line" d="M705 350c10-18 30-30 48-30 16 0 30 4 42 12"/>
                            <!-- pin -->
                            <path d="M718 462l30-47c10-8 30-8 42 8 6 8 9 18 8 27l-46 36z" fill="url(#pin)"/>
                            <circle cx="735" cy="474" r="20.500" fill="#457e62"/>
                            <!-- holes -->
                            <ellipse cx="788" cy="167" rx="17" ry="7" fill="#3b7b5c"/>
                            <ellipse id="left-face" cx="618" cy="347" rx="28" ry="15" fill="#478b6b"/>
                            <ellipse cx="618" cy="346" rx="13" ry="8" fill="#36704f"/>
                            <ellipse cx="870" cy="525" rx="16" ry="7" fill="#3b7b5c"/>
                            <!-- feature edges -->
                            <path class="line" d="M769 285c6 1 14 0 17-3l8-9M772 292c7 0 14-2 18-4M777 303c9-4 16-11 21-20M840 387l16-12 9-8M724 283l7 3M725 292l4 11M787 560h22M813 550l11 2 12-6M809 562c12 1 20-2 27-9M842 515l8 6M790 183c10-4 20-2 24 5l2 20M620 372l20 8M621 378l22 14M637 361c-8 8-12 18-10 28M645 361c-6 6-12 18-10 29M650 362c-6 12-8 22-5 32M631 362c-7 6-10 14-9 22"/>
                            <path class="line dashed" d="M640 389c12 5 18 14 26 24 12 16 26 38 39 55 12 18 26 31 42 41 18 10 33 21 45 41 3 6 3 12 0 17"/>
                        </g>
                        <!-- element edges -->
                        <g clip-path="url(#part-clip)">
                            <path d="M748 187h39c-9 9-14 20-17 33-3 12-3 48-1 65l3 7h-40c-3-30-3-65 16-105z" fill="url(#tri)"/>
                            <path d="M787 187c9-2 15 5 15 12-9 11-16 26-17 41-1 15 0 30 1 42l4 6 66 87c14 18 24 31 27 45 5 15 5 25 4 33-2 12-3 17-7 24-10 16-18 23-30 36-8 9-14 17-14 32-8 11-20 15-27 18-1-14 1-20 6-27 9-10 19-14 28-22 10-11 21-26 24-49 3-25-1-60-27-78l-63-84c-4-5-7-11-8-18-2-20-4-45 1-67 3-13 8-22 17-31z" fill="url(#fine)"/>
                            <path d="M797 282l68 85c9 12 16 22 22 36 3 9 7 18 7 30 0 20 2 36-12 57l-8-10c14-10 14-40 9-60-4-17-13-30-27-45l-66-87z" fill="url(#tri)"/>
                            <path d="M727 455l21-40c10-8 30-8 42 8 6 8 9 18 8 27l-43 34c0-16-8-29-28-29z" fill="url(#fine)"/>
                            <path d="M787 560h22c6 0 20-4 28-14l21-30c12-5 37-5 40 2l6 35c-2 7-9 11-22 13l-25 22c-6 7-12 13-20 13h-22c-10-1-16-8-20-14-4-8-7-18-8-27z" fill="url(#fine)"/>
                            <path d="M590 347c4-18 50-20 56 2l5 5c5 4 13 4 19 1 8-4 12-13 20-18 15-10 26-26 35-45l4 11c-7 19-17 32-29 47-14 18-22 33-49 33l-26 6c-12 3-34-2-40-16z" fill="url(#fine)" opacity=".6"/>
                            <path d="M748 173c0-16 34-23 56-22 14 0 22 4 23 10l5 32-16 15-7-20-60-1z" fill="url(#tri)" opacity=".6"/>
                        </g>
                        <g clip-path="url(#body-clip)">
                            <path d="M732 292h38l7 11 63 84c22 14 28 50 27 78-3 23-14 38-24 49-9 8-19 12-28 22-5 8-6 14-6 24h-22c-5-14-20-28-45-40-44-22-64-58-92-98l-5-38c24 0 43-20 57-36 14-18 24-28 30-56z" fill="url(#specks)"/>
                        </g>
                        <!-- work coordinate system -->
                        <path d="M792 424l-28-4" stroke="#e9938a" stroke-width="2"/><path d="M762 420l10-2v5z" fill="#d85d50"/>
                        <path d="M791 424l-13 13" stroke="#79a8ef" stroke-width="2"/>
                        <path d="M792 425l5 29" stroke="#a4dc95" stroke-width="1.300"/>
                        <text x="778" y="446" class="axis blue">ZC</text>

                        <!-- view triad -->
                        <path d="M296 552l10-10 23-1-10 11zM296 552h23l4 23-25-1zM319 552l10-11 4 22-10 12z" fill="#fff" stroke="#b9b0ae" stroke-width=".8"/>
                        <path d="M296 558h-12" stroke="#b33a3f" stroke-width="3"/><path d="M275 558l11-4v8z" fill="#b33a3f"/>
                        <path d="M310 563l-8 8" stroke="#1746dd" stroke-width="3"/><path d="M298 576l2-9 7 6z" fill="#1746dd"/>
                        <path d="M318 576l2 13" stroke="#227a31" stroke-width="3"/><path d="M322 598l-6-10 7-1z" fill="#227a31"/>
                        <text x="267" y="561" class="axis red">X</text>
                        <text x="292" y="582" class="axis blue">Z</text>
                        <text x="321" y="607" class="axis green">Y</text>
                    </svg>
                </div>
                <aside class="side-tools">
                    <button aria-label="Library"><svg><use href="#r-lib"/></svg></button>
                    <button aria-label="Physical Properties"><svg><use href="#i-prop"/></svg></button>
                    <button aria-label="3D Tetrahedral"><svg><use href="#i-tet"/></svg></button>
                    <button aria-label="Stitch Edge"><svg><use href="#i-stitch"/></svg></button>
                    <button aria-label="1D Mesh"><svg><use href="#i-curve"/></svg></button>
                    <button aria-label="2D Mesh"><svg><use href="#i-mesh2"/></svg></button>
                    <button aria-label="Manage Materials"><svg><use href="#i-atom"/></svg></button>
                    <button aria-label="Element Quality"><svg><use href="#i-check"/></svg></button>
                    <button aria-label="Mesh Collector"><svg><use href="#i-coll"/></svg></button>
                    <button aria-label="Delete Face"><svg><use href="#r-orange"/></svg></button>
                </aside>
            </div>
        </section>
    </main>
    <footer class="statusbar"></footer>

</body>
</html>
```

FILE: styles.css
```css
* {
    box-sizing: border-box;
}

body {
    margin: 0;
    height: 100vh;
    display: flex;
    flex-direction: column;
    overflow: hidden;
    background-color: #303030;
    color: #e2e2e2;
    font-family: "Noto Sans", "Open Sans", sans-serif;
    font-size: 9px;
    line-height: 12px;
}

h1, h2 {
    margin: 0;
    font-size: 9px;
    font-weight: 400;
}

button {
    display: flex;
    align-items: center;
    padding: 0;
    border: none;
    background: none;
    color: inherit;
    font: inherit;
    cursor: pointer;
    white-space: nowrap;
}

svg {
    display: block;
    flex: none;
    width: 12px;
    height: 12px;
}

.sprite {
    display: none;
}

.caret {
    display: inline-block;
    flex: none;
    width: 0;
    height: 0;
    border: 3px solid transparent;
    border-top: 3px solid #f0f0f0;
    border-bottom: none;
}

/* Title bar */
.titlebar {
    display: grid;
    grid-template-columns: 11fr auto 9fr;
    align-items: center;
    height: 19px;
    background: linear-gradient(90deg, #006587, #007199 40%, #0079a2);
    color: #e3f4f9;
}

.quick {
    display: flex;
    align-items: center;
    gap: 8px;
    padding-left: 3px;
    font-size: 8px;
}

.quick button {
    gap: 3px;
}

.quick .tight {
    margin-left: -6px;
    gap: 3px;
}

.logo {
    font-family: "Open Sans", sans-serif;
    font-weight: 800;
    font-size: 15px;
    color: #fff;
}

.window-buttons {
    display: flex;
    justify-content: flex-end;
    align-items: center;
    gap: 8px;
    padding-right: 4px;
}

.window-buttons svg {
    width: 10px;
    height: 10px;
}

.brand {
    margin-right: 8px;
    font-family: "Open Sans", sans-serif;
    font-size: 10px;
    font-weight: 800;
    color: #fff;
}

/* Ribbon tabs */
.tabbar {
    display: flex;
    align-items: center;
    height: 20px;
    background: linear-gradient(90deg, #006587, #007199 40%, #0079a2);
}

.tabbar nav {
    display: flex;
    flex: 1;
    gap: 2px;
    padding-left: 3px;
}

.tabbar a {
    height: 19px;
    padding: 4px 10px 0;
    color: #e3f4f9;
    text-decoration: none;
    border-bottom: 2px solid transparent;
}

.tabbar a.active {
    margin: 0 -1px 0 3px;
    color: #e6d884;
    border-color: #c9bf69;
}

.search {
    display: flex;
    align-items: center;
    width: 128px;
    height: 16px;
    background-color: #2e2e2e;
    border: 1px solid #a9c3cc;
}

.search input {
    flex: 1;
    min-width: 0;
    padding: 0 2px;
    border: none;
    outline: none;
    background: none;
    color: #ddd;
    font: inherit;
    font-size: 8px;
}

.search input::placeholder {
    color: #959595;
}

.tab-tools {
    display: flex;
    gap: 4px;
    padding: 0 2px 0 5px;
}

/* Ribbon */
.ribbon {
    display: flex;
    height: 65px;
    padding-top: 3px;
    border-bottom: 1px solid #1e1e1e;
    font-size: 8px;
}

.group {
    display: flex;
    flex-direction: column;
    height: 60px;
    border-right: 1px solid #1f1f1f;
}

.group-body {
    display: flex;
    flex: 1;
    justify-content: space-between;
    align-items: flex-start;
    padding: 0 4px 0 7px;
}

.group-name {
    display: flex;
    align-items: center;
    height: 10px;
    padding-right: 5px;
    color: #4199b0;
    white-space: nowrap;
}

.group-name span {
    flex: 1;
    text-align: center;
}

.g-context { width: 112px; }
.g-properties { width: 162px; }
.g-polygon { width: 108px; }
.g-mesh { width: 162px; }
.g-connections { width: 119px; }
.g-universal { width: 81px; }
.g-checks { width: 109px; }
.g-utilities { width: 175px; }

.big {
    flex-direction: column;
    gap: 3px;
    text-align: center;
}

.big svg {
    width: 20px;
    height: 20px;
}

.big .caret {
    vertical-align: middle;
}

.more {
    min-width: 22px;
}

.big:disabled {
    color: #777;
}

.framed svg {
    outline: 1px solid #272727;
}

.g-context .group-body {
    padding-right: 7px;
}

.stack {
    display: flex;
    flex-direction: column;
    gap: 6px;
    padding-top: 1px;
}

.stack svg {
    width: 10px;
    height: 10px;
}

.pair {
    gap: 8px;
}

.pair svg {
    width: 16px;
    height: 16px;
}

.group-end {
    display: flex;
    flex: 1;
    justify-content: flex-end;
    align-items: flex-end;
    padding: 0 2px 5px;
}

/* Selection toolbar */
.toolbar {
    display: flex;
    align-items: center;
    height: 20px;
    border-bottom: 1px solid #252525;
    font-size: 8px;
}

.menu-button {
    gap: 3px;
    width: 62px;
    padding-left: 6px;
}

.burger {
    font-size: 9px;
}

.combo {
    position: relative;
    height: 15px;
    margin-right: 5px;
}

.combo::after {
    content: "";
    position: absolute;
    right: 4px;
    top: 6px;
    border: 3px solid transparent;
    border-top: 4px solid #eee;
    border-bottom: none;
    pointer-events: none;
}

.combo select {
    width: 100%;
    height: 15px;
    padding: 0 1px;
    appearance: none;
    background-color: #2d2d2d;
    border: 1px solid #b5b5b5;
    border-radius: 0;
    color: #e2e2e2;
    font: inherit;
}

.filter-combo { width: 109px; }
.scope-combo { width: 114px; margin-left: 2px; }

.toolbar button:disabled {
    opacity: .3;
}

.tools {
    display: flex;
    gap: 4px;
    padding: 0 8px 0 1px;
    border-right: 1px solid #1f1f1f;
}

.tools button {
    gap: 2px;
}

.display-tools {
    gap: 3px;
    padding: 0 9px 0 8px;
}

.on {
    background-color: #0a53b0;
}

.toolbar-end {
    margin-left: auto;
    margin-right: 2px;
}

/* Workspace */
.workspace {
    display: flex;
    flex: 1;
    min-height: 0;
}

.rail {
    display: flex;
    flex-direction: column;
    width: 20px;
    padding-bottom: 30px;
    background-color: #474747;
    border-right: 1px solid #2a2a2a;
}

.rail button {
    justify-content: center;
    padding-left: 3px;
}

.rail svg {
    width: 15px;
    height: 15px;
}

.rail .gear {
    height: 25px;
    padding: 0 2px 8px 0;
}

.rail .gear svg {
    width: 10px;
    height: 10px;
}

.rail-items {
    display: flex;
    flex-direction: column;
    flex: 1;
}

.rail-items button {
    flex: 4;
}

.rail-items .wide {
    flex: 5;
}

.rail-items .selected {
    background-color: #2e2e2e;
}

/* Navigator panel */
.navigator {
    display: flex;
    flex-direction: column;
    width: 229px;
    padding: 0 6px 4px 5px;
}

.panel-title {
    display: flex;
    align-items: center;
    justify-content: space-between;
    height: 20px;
    padding: 0 3px 0 1px;
}

.maximize {
    width: 9px;
    height: 9px;
    border: 1px solid #e8e8e8;
    border-top-width: 2px;
}

.tree {
    display: flex;
    flex-direction: column;
    flex: 1;
    min-height: 0;
    overflow: hidden;
}

.tree table {
    width: 100%;
    table-layout: fixed;
    border-collapse: collapse;
}

.tree th, .tree td {
    height: 15px;
    padding: 0 0 0 3px;
    overflow: hidden;
    white-space: nowrap;
    text-align: left;
    font-weight: 400;
    border-right: 1px solid #2b2b2b;
}

.tree td {
    padding-left: 0;
}

.tree th {
    background-color: #5a5a5a;
}

.col-name { width: 125px; }
.col-c { width: 19px; }

.tree tbody tr:nth-child(even) {
    background-color: #373737;
}

.node {
    display: flex;
    align-items: center;
    height: 15px;
}

.node svg {
    width: 10px;
    height: 10px;
    margin: 0 1px;
}

.node .branch {
    width: 13px;
    height: 15px;
    margin: 0 -1px 0 0;
}

.node input {
    position: relative;
    width: 9px;
    height: 9px;
    margin: 0;
    appearance: none;
    border: 1px solid #cfcfcf;
    background-color: #3a2226;
}

.node input:checked::after {
    content: "";
    position: absolute;
    left: 2px;
    top: 0;
    width: 3px;
    height: 5px;
    border: solid #e02a3c;
    border-width: 0 2px 2px 0;
    transform: rotate(40deg);
}

.root, .tree .status {
    color: #2410ff;
}

.tree .status {
    padding-left: 3px;
}

/* striped filler below the last node */
.empty-rows {
    display: grid;
    grid-template-columns: 125px 19px 1fr;
    flex: 1;
    background: repeating-linear-gradient(#373737 0 14px, #2d2d2d 14px 15px, #313131 15px 29px, #2d2d2d 29px 30px);
}

.empty-rows span {
    border-right: 1px solid #2b2b2b;
}

.hscroll {
    height: 13px;
    margin-bottom: 2px;
    padding: 6px 0 0 13px;
    background-color: #efefef;
}

.hscroll span {
    display: block;
    width: 51px;
    height: 2px;
    background-color: #868686;
}

.fold {
    gap: 6px;
    height: 18px;
    padding-left: 5px;
    border-top: 1px solid #555;
    color: #46a3bd;
    font-size: 10px;
}

.fold::before {
    content: "";
    border: 4px solid transparent;
    border-left: 5px solid #46a3bd;
    border-right: none;
}

.fold:last-child {
    border-top-color: #1f1f1f;
    border-bottom: 1px solid #1f1f1f;
}

/* Graphics window */
.stage {
    display: flex;
    flex-direction: column;
    flex: 1;
    min-width: 0;
}

.doc-tabs {
    display: flex;
    height: 19px;
    margin-right: 20px;
    border-left: 1px solid #252525;
    border-bottom: 2px solid #3aa0c4;
}

.doc-tabs button {
    gap: 2px;
    padding: 0 8px 0 3px;
}

.doc-tabs svg {
    width: 11px;
    height: 11px;
}

.doc-tabs .mark {
    width: 8px;
    height: 8px;
}

.doc-tabs button + button {
    margin-left: 5px;
}

.doc-tabs button + .active {
    margin-left: 2px;
}

.doc-tabs .active + button {
    margin-left: 0;
}

.doc-tabs .active {
    padding-right: 1px;
    background-color: #2c98bd;
    color: #fff;
}

.view-row {
    display: flex;
    flex: 1;
    min-height: 0;
}

.viewport {
    flex: 1;
    min-width: 0;
    background-color: #fff;
    border-left: 1px solid #151515;
}

.viewport svg {
    width: 100%;
    height: 100%;
}

.edges > * {
    stroke: #1f3d2e;
    stroke-width: .7;
}

.edges .line {
    fill: none;
    stroke-width: .8;
}

.edges .dashed {
    stroke-dasharray: 5 1;
}

.axis {
    font-size: 8px;
}

.red { fill: #b33a3f; }
.blue { fill: #2450e0; }
.green { fill: #227a31; }

.side-tools {
    display: flex;
    flex-direction: column;
    width: 20px;
    margin-top: -14px;
}

.side-tools button {
    justify-content: center;
    height: 20px;
}

.side-tools svg {
    width: 14px;
    height: 14px;
}

.side-tools button:last-child {
    height: 26px;
    padding-bottom: 6px;
    border-bottom: 1px solid #1c1c1c;
}

.statusbar {
    height: 9px;
    border-top: 1px solid #1c1c1c;
}
```
